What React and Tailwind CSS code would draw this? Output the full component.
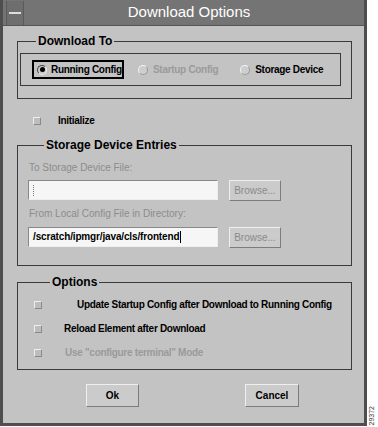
const font = { fontFamily: '"Liberation Sans", Arial, sans-serif' };

const Radio = ({ checked }) =>
  checked ? (
    <span className="flex h-[10px] w-[10px] items-center justify-center rounded-full border border-t-[#444] border-l-[#444] border-b-[#eee] border-r-[#eee] bg-[#c8c8c8]">
      <span className="h-[5px] w-[5px] rounded-full bg-black" />
    </span>
  ) : (
    <span className="h-[10px] w-[10px] rounded-full border border-t-[#f2f2f2] border-l-[#f2f2f2] border-b-[#9a9a9a] border-r-[#9a9a9a] bg-[#cdcdcd]" />
  );

const Check = () => (
  <span className="h-[8px] w-[8px] shrink-0 border border-t-[#eeeeee] border-l-[#eeeeee] border-b-[#8a8a8a] border-r-[#8a8a8a] bg-[#bdbdbd]" />
);

const Button = ({ children, className = "" }) => (
  <button
    type="button"
    className={`flex items-center justify-center border border-t-[#efefef] border-l-[#efefef] border-b-[#7c7c7c] border-r-[#7c7c7c] bg-[#cbcbcb] text-[10px] leading-[12px] ${className}`}
  >
    {children}
  </button>
);

const Frame = ({ title, className = "", children }) => (
  <fieldset className={`border border-[#3a3a3a] ${className}`}>
    <legend className="ml-[16px] h-[12px] px-[2px] text-[12px] font-bold leading-[12px] text-black">
      {title}
    </legend>
    {children}
  </fieldset>
);

// one check-box row inside the Options frame
const OptionRow = ({ label, gap, muted, className = "" }) => (
  <div className={`flex h-[12px] items-center ${className}`}>
    <Check />
    <span
      className={`text-[10px] font-bold leading-[12px] tracking-[-0.3px] ${muted ? "text-[#9a9a9a]" : "text-black"}`}
      style={{ marginLeft: gap }}
    >
      {label}
    </span>
  </div>
);

export default function App() {
  return (
    <div className="flex h-[427px] w-[378px] bg-white" style={font}>
      {/* dialog window */}
      <div className="flex h-[426px] w-[367px] flex-col border-l-[3px] border-r-[3px] border-b-[3px] border-[#4e4e4e] bg-[#c3c3c3]">
        {/* title bar */}
        <div className="flex h-[26px] shrink-0 items-center border-b border-[#555] bg-[#747474]">
          <div className="ml-[3px] flex h-[24px] w-[18px] items-center justify-center border-x border-[#5a5a5a] bg-[#6e6e6e]">
            <span className="h-[2px] w-[12px] bg-[#dddddd]" />
          </div>
          <div className="flex-1 pr-[10px] text-center text-[15px] text-white">Download Options</div>
        </div>

        <div className="flex flex-1 flex-col pl-[14px] pr-[12px] pt-[9px]">
          {/* Download To */}
          <Frame title="Download To" className="pb-[12px] pl-[2px] pr-[10px]">
            <div className="mt-[6px] flex h-[33px] items-center border border-[#3a3a3a] pl-[11px]">
              <div className="flex h-[19px] w-[92px] items-center gap-[4px] border-2 border-black pl-[3px]">
                <Radio checked />
                <span className="text-[10px] font-bold leading-[12px] tracking-[-0.3px] text-black">Running Config</span>
              </div>
              <div className="ml-[14px] flex items-center gap-[5px]">
                <Radio />
                <span className="text-[10px] font-bold leading-[12px] tracking-[-0.3px] text-[#9a9a9a]">Startup Config</span>
              </div>
              <div className="ml-[22px] flex items-center gap-[5px]">
                <Radio />
                <span className="text-[10px] font-bold leading-[12px] tracking-[-0.3px] text-black">Storage Device</span>
              </div>
            </div>
          </Frame>

          {/* Initialize */}
          <div className="mt-[16px] flex h-[12px] items-center pl-[16px]">
            <Check />
            <span className="ml-[17px] text-[10px] font-bold leading-[12px] tracking-[-0.3px] text-black">Initialize</span>
          </div>

          {/* Storage Device Entries */}
          <Frame title="Storage Device Entries" className="mt-[12px] pb-[17px] pl-[10px]">
            <div className="mt-[11px] h-[12px] pl-[1px] text-[10px] leading-[12px] text-[#8c8c8c]">To Storage Device File:</div>
            <div className="mt-[6px] flex">
              <div className="flex h-[20px] w-[190px] items-center border border-t-[#888] border-l-[#888] border-b-[#eee] border-r-[#eee] bg-[#f6f6f6] pl-[4px]">
                <span className="h-[11px] w-[1px] border-l border-dotted border-[#777]" />
              </div>
              <Button className="ml-[11px] h-[21px] w-[52px] text-[#8a8a8a]">Browse...</Button>
            </div>
            <div className="mt-[7px] h-[12px] pl-[1px] text-[10px] leading-[12px] text-[#8c8c8c]">From Local Config File in Directory:</div>
            <div className="mt-[7px] flex">
              <div className="flex h-[20px] w-[190px] items-center border border-t-[#888] border-l-[#888] border-b-[#eee] border-r-[#eee] bg-[#f6f6f6] pl-[4px] text-[10px] font-bold leading-[12px] tracking-[-0.15px] text-black">
                /scratch/ipmgr/java/cls/frontend
                <span className="ml-[1px] h-[12px] w-[1px] bg-black" />
              </div>
              <Button className="ml-[11px] h-[21px] w-[52px] text-[#8a8a8a]">Browse...</Button>
            </div>
          </Frame>

          {/* Options */}
          <Frame title="Options" className="mt-[10px] pb-[10px] pl-[16px]">
            <OptionRow className="mt-[11px]" gap={35} label="Update Startup Config after Download to Running Config" />
            <OptionRow className="mt-[12px]" gap={22} label="Reload Element after Download" />
            <OptionRow className="mt-[12px]" gap={23} muted label={'Use "configure terminal" Mode'} />
          </Frame>

          {/* buttons */}
          <div className="mt-[14px] flex pl-[69px]">
            <Button className="h-[23px] w-[53px] font-bold text-black">Ok</Button>
            <Button className="ml-[106px] h-[23px] w-[54px] font-bold text-black">Cancel</Button>
          </div>
        </div>
      </div>

      {/* figure number */}
      <div className="flex flex-1 items-end justify-center pb-[2px]">
        <span className="rotate-180 text-[7px] text-[#333] [writing-mode:vertical-rl]">29372</span>
      </div>
    </div>
  );
}
